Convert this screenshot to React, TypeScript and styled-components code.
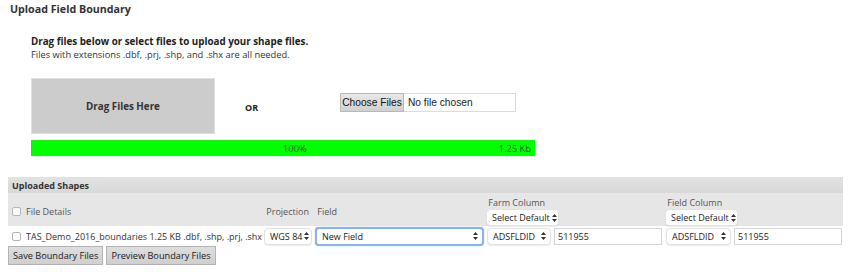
import styled, { createGlobalStyle } from "styled-components";

const GlobalStyle = createGlobalStyle`
  body {
    margin: 0;
    background: #fff;
    font-family: "Open Sans", "Liberation Sans", Arial, sans-serif;
    font-size: 9px;
    color: #333;
  }
`;

const Page = styled.div`
  width: 852px;
  height: 274px;
  padding: 0 8px;
  box-sizing: border-box;
  overflow: hidden;
  white-space: nowrap;
`;

const Title = styled.h3`
  margin: 0;
  padding: 2px 0 0 2px;
  font: 700 10.7px "Open Sans", sans-serif;
  color: #333;
  line-height: 15px;
`;

const Upload = styled.div`
  padding: 19px 0 0 23px;
  h4 {
    margin: 0;
    font: 700 9.8px "Open Sans", sans-serif;
    color: #222;
    line-height: 12px;
  }
  p {
    margin: 0;
    font: 400 9.3px "Open Sans", sans-serif;
    color: #333;
    line-height: 14px;
  }
`;

const DropRow = styled.div`
  display: flex;
  align-items: center;
  margin-top: 16px;
`;

const DropZone = styled.div`
  flex-shrink: 0;
  width: 184px;
  height: 56px;
  box-sizing: border-box;
  background: #cccccc;
  border: 1px solid #e0e0e0;
  display: flex;
  align-items: center;
  justify-content: center;
  font: 700 9.8px "Open Sans", sans-serif;
  color: #333;
`;

const Or = styled.div`
  flex-shrink: 0;
  width: 125px;
  padding-left: 30px;
  padding-top: 2px;
  box-sizing: border-box;
  font: 700 9px "Open Sans", sans-serif;
  color: #222;
`;

const FilePicker = styled.div`
  display: flex;
  align-self: flex-start;
  margin-top: 15px;
  height: 19px;
`;

const ChooseButton = styled.div`
  flex-shrink: 0;
  width: 64px;
  height: 19px;
  box-sizing: border-box;
  background: linear-gradient(#e8e8e8, #d0d0d0);
  border: 1px solid #b8b8b8;
  display: flex;
  align-items: center;
  justify-content: center;
  font: 400 10.2px "Liberation Sans", Arial, sans-serif;
  color: #111;
`;

const NoFile = styled.div`
  flex-shrink: 0;
  width: 112px;
  height: 19px;
  box-sizing: border-box;
  border: 1px solid #dcdcdc;
  border-left: none;
  padding-left: 4px;
  display: flex;
  align-items: center;
  font: 400 10.2px "Liberation Sans", Arial, sans-serif;
  color: #222;
`;

const Progress = styled.div`
  margin-top: 6px;
  width: 504px;
  height: 16px;
  background: #00ff00;
  position: relative;
  font: 400 9.3px "Open Sans", sans-serif;
  color: #2d5a2d;
  display: flex;
  align-items: center;
`;

const Percent = styled.span`
  position: absolute;
  left: 252px;
`;

const Size = styled.span`
  position: absolute;
  right: 4px;
`;

const Shapes = styled.table`
  margin-top: 21px;
  width: 835px;
  table-layout: fixed;
  border-collapse: collapse;
  font: 400 9px "Open Sans", sans-serif;
  color: #555;
  th {
    text-align: left;
    font-weight: 400;
    padding: 0;
  }
`;

const PanelHead = styled.th`
  background: linear-gradient(#e2e2e2, #d8d8d8);
  height: 16px;
  padding: 0 0 0 4px !important;
  font-weight: 700 !important;
  color: #333;
`;

const ColHead = styled.tr`
  background: #e6e6e6;
  height: 33px;
  th {
    vertical-align: middle;
    padding-top: 4px;
  }
`;

const Stack = styled.div`
  display: flex;
  flex-direction: column;
  align-items: flex-start;
  gap: 1px;
  padding-left: 1px;
  span {
    line-height: 11px;
  }
`;

const Check = styled.span`
  display: inline-block;
  width: 7px;
  height: 7px;
  border: 1px solid #b5b5b5;
  border-radius: 2px;
  background: #fafafa;
  margin: 0 5px 0 4px;
  vertical-align: -1px;
`;

const Row = styled.tr`
  height: 20px;
  td {
    padding: 0;
    vertical-align: middle;
    white-space: nowrap;
    color: #333;
  }
`;

const Pair = styled.div`
  display: flex;
  gap: 3px;
  padding-left: 2px;
`;

const SelectBox = styled.div<{ $w: number; $focus?: boolean }>`
  flex-shrink: 0;
  width: ${(p) => p.$w}px;
  height: ${(p) => (p.$focus ? 19 : 17)}px;
  box-sizing: border-box;
  display: inline-flex;
  align-items: center;
  justify-content: space-between;
  gap: 2px;
  padding: 0 4px 0 5px;
  background: #fff;
  border-radius: 4px;
  border: ${(p) => (p.$focus ? "2px solid #8cb4e8" : "1px solid #e2e2e2")};
  box-shadow: ${(p) => (p.$focus ? "0 0 1px #5d9be0" : "0 1px 1px rgba(0,0,0,0.08)")};
  font: 400 9px "Open Sans", sans-serif;
  line-height: 11px;
  color: #222;
  svg {
    flex-shrink: 0;
  }
`;

const TextInput = styled.div<{ $w: number }>`
  flex-shrink: 0;
  width: ${(p) => p.$w}px;
  height: 17px;
  box-sizing: border-box;
  border: 1px solid #d6d6d6;
  padding-left: 3px;
  display: flex;
  align-items: center;
  font: 400 9px "Open Sans", sans-serif;
  color: #222;
  background: #fff;
`;

const Buttons = styled.div`
  display: flex;
  gap: 3px;
`;

const Button = styled.div`
  height: 19px;
  box-sizing: border-box;
  padding: 0 4px;
  display: flex;
  align-items: center;
  background: linear-gradient(#dedede, #cfcfcf);
  border: 1px solid #b3b3b3;
  font: 400 9.2px "Open Sans", sans-serif;
  color: #222;
`;

const Arrows = () => (
  <svg width="5" height="8" viewBox="0 0 5 8">
    <path d="M2.5 0 L5 3 L0 3 Z M2.5 8 L5 5 L0 5 Z" fill="#333" />
  </svg>
);

const Select = ({ w, label, focus }: { w: number; label: string; focus?: boolean }) => (
  <SelectBox $w={w} $focus={focus}>
    <span>{label}</span>
    <Arrows />
  </SelectBox>
);

export default function App() {
  return (
    <>
      <GlobalStyle />
      <Page>
        <Title>Upload Field Boundary</Title>
        <Upload>
          <h4>Drag files below or select files to upload your shape files.</h4>
          <p>Files with extensions .dbf, .prj, .shp, and .shx are all needed.</p>
          <DropRow>
            <DropZone>Drag Files Here</DropZone>
            <Or>OR</Or>
            <FilePicker>
              <ChooseButton>Choose Files</ChooseButton>
              <NoFile>No file chosen</NoFile>
            </FilePicker>
          </DropRow>
          <Progress>
            <Percent>100%</Percent>
            <Size>1.25 Kb</Size>
          </Progress>
        </Upload>
        <Shapes>
          <colgroup>
            <col style={{ width: 256 }} />
            <col style={{ width: 51 }} />
            <col style={{ width: 170 }} />
            <col style={{ width: 179 }} />
            <col style={{ width: 179 }} />
          </colgroup>
          <thead>
            <tr>
              <PanelHead colSpan={5}>Uploaded Shapes</PanelHead>
            </tr>
            <ColHead>
              <th>
                <Check />
                File Details
              </th>
              <th>&nbsp;Projection</th>
              <th>&nbsp;Field</th>
              <th>
                <Stack>
                  <span>&nbsp;Farm Column</span>
                  <Select w={73} label="Select Default" />
                </Stack>
              </th>
              <th>
                <Stack>
                  <span>&nbsp;Field Column</span>
                  <Select w={73} label="Select Default" />
                </Stack>
              </th>
            </ColHead>
          </thead>
          <tbody>
            <Row>
              <td>
                <Check />
                TAS_Demo_2016_boundaries 1.25 KB .dbf, .shp, .prj, .shx
              </td>
              <td>
                <Select w={48} label="WGS 84" />
              </td>
              <td>
                <Select w={169} label="New Field" focus />
              </td>
              <td>
                <Pair>
                  <Select w={64} label="ADSFLDID" />
                  <TextInput $w={108}>511955</TextInput>
                </Pair>
              </td>
              <td>
                <Pair>
                  <Select w={65} label="ADSFLDID" />
                  <TextInput $w={108}>511955</TextInput>
                </Pair>
              </td>
            </Row>
          </tbody>
        </Shapes>
        <Buttons>
          <Button>Save Boundary Files</Button>
          <Button>Preview Boundary Files</Button>
        </Buttons>
      </Page>
    </>
  );
}
